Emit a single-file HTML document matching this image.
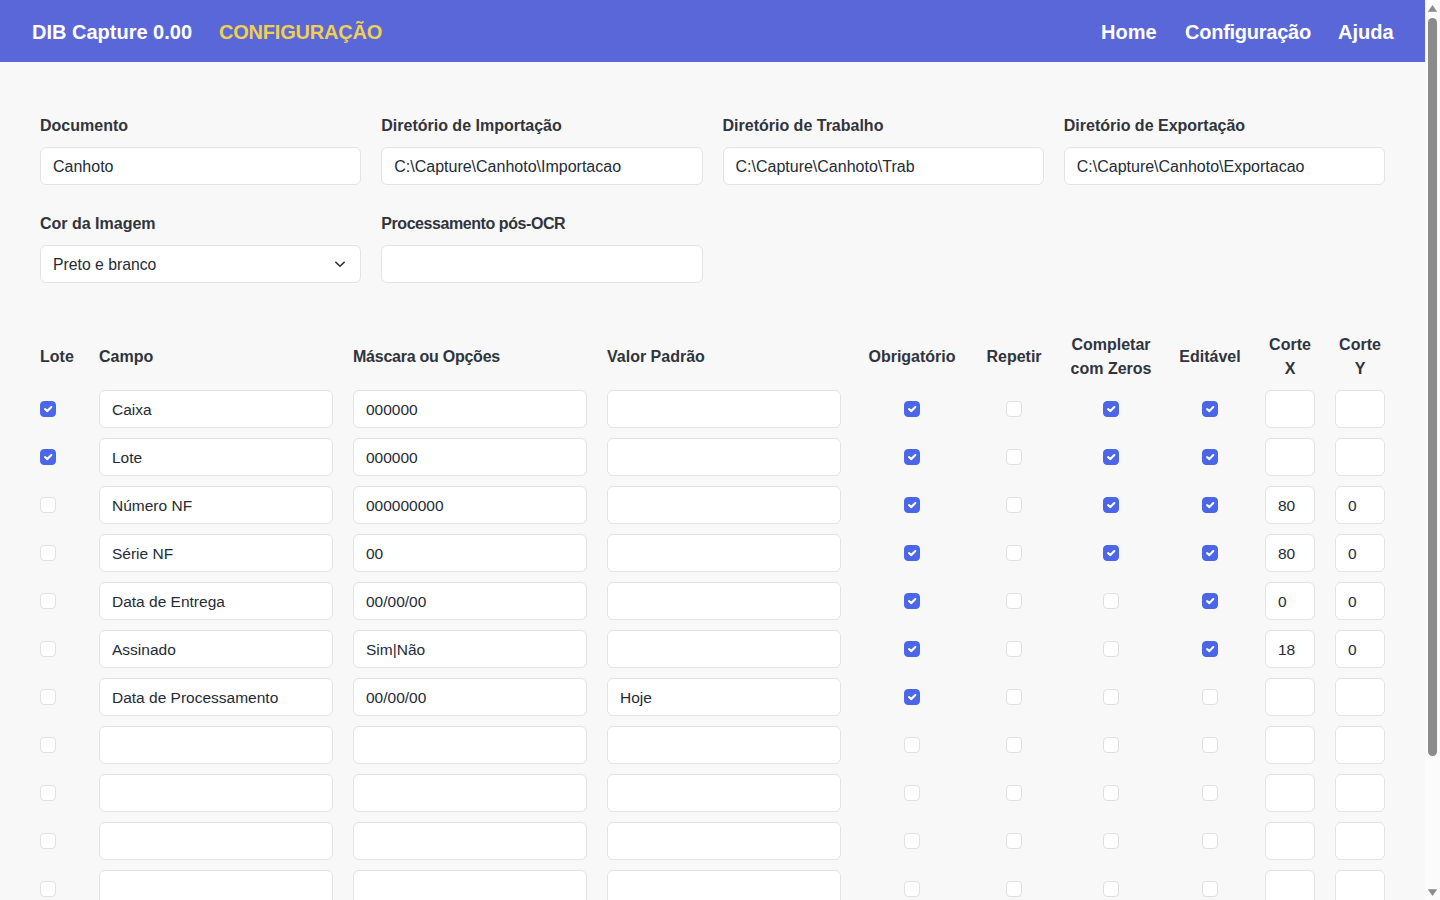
<!DOCTYPE html><html lang="pt"><head><meta charset="utf-8"><title>DIB Capture - Configuração</title><style>
*{box-sizing:border-box;margin:0;padding:0}
html,body{width:1440px;height:900px;overflow:hidden;background:#f8f8f8;font-family:"Liberation Sans",sans-serif;}
.hdr{position:absolute;left:0;top:0;width:1425px;height:62px;background:#5a67d8;}
.ht{position:absolute;top:1px;height:62px;line-height:62px;font-size:20px;font-weight:bold;color:#fff;white-space:nowrap}
.lbl{position:absolute;font-size:16px;font-weight:bold;color:#30343d;line-height:24px;white-space:nowrap}
.th{position:absolute;font-size:16px;font-weight:bold;color:#30343d;line-height:24px;white-space:nowrap;text-align:center}
.in{position:absolute;height:38px;background:#fff;border:1px solid #e3e3e5;border-radius:6px;padding:2px 0 0 12px;font-size:15.5px;line-height:34px;color:#252b36;white-space:nowrap;overflow:hidden}
.cb{position:absolute;width:16px;height:16px;border-radius:4px;background:#fff;border:1px solid #e0e0e3}
.cb.on{background:#4b66e6;border-color:#4b66e6}
.cb svg{position:absolute;left:-1px;top:-1px}
.sb{position:absolute;left:1425px;top:0;width:15px;height:900px;background:#fbfbfb}
.thumb{position:absolute;left:3px;top:18px;width:9px;height:738px;border-radius:5px;background:#8b8b8b}
</style></head><body>
<div class="hdr">
<div class="ht" style="left:32px">DIB Capture 0.00</div>
<div class="ht" style="left:219px;letter-spacing:-0.2px;color:#f0d050">CONFIGURAÇÃO</div>
<div class="ht" style="left:1101px">Home</div>
<div class="ht" style="left:1185px;letter-spacing:-0.25px">Configuração</div>
<div class="ht" style="left:1338px">Ajuda</div>
</div>
<div class="lbl" style="left:40px;top:114px">Documento</div>
<div class="in" style="left:40px;top:147px;width:321.25px;font-size:16px">Canhoto</div>
<div class="lbl" style="left:381.25px;top:114px">Diretório de Importação</div>
<div class="in" style="left:381.25px;top:147px;width:321.25px;font-size:16px">C:\Capture\Canhoto\Importacao</div>
<div class="lbl" style="left:722.5px;top:114px">Diretório de Trabalho</div>
<div class="in" style="left:722.5px;top:147px;width:321.25px;font-size:16px">C:\Capture\Canhoto\Trab</div>
<div class="lbl" style="left:1063.75px;top:114px">Diretório de Exportação</div>
<div class="in" style="left:1063.75px;top:147px;width:321.25px;font-size:16px">C:\Capture\Canhoto\Exportacao</div>
<div class="lbl" style="left:40px;top:212px">Cor da Imagem</div>
<div class="in" style="left:40px;top:245px;width:321.25px;font-size:15.75px">Preto e branco<svg style="position:absolute;left:293px;top:15px" width="13" height="8" viewBox="0 0 13 8"><path d="M1.4 0.9L6 5.2L10.6 0.9" fill="none" stroke="#333" stroke-width="1.5"/></svg></div>
<div class="lbl" style="left:381.25px;top:212px;letter-spacing:-0.43px">Processamento pós-OCR</div>
<div class="in" style="left:381.25px;top:245px;width:321.25px"></div>
<div class="lbl" style="left:40px;top:345px">Lote</div>
<div class="lbl" style="left:99px;top:345px">Campo</div>
<div class="lbl" style="left:353px;top:345px"><span style='letter-spacing:-0.25px'>Máscara ou Opções</span></div>
<div class="lbl" style="left:607px;top:345px">Valor Padrão</div>
<div class="th" style="left:812px;width:200px;top:345px">Obrigatório</div>
<div class="th" style="left:914px;width:200px;top:345px">Repetir</div>
<div class="th" style="left:1011px;width:200px;top:333px">Completar<br>com Zeros</div>
<div class="th" style="left:1110px;width:200px;top:345px">Editável</div>
<div class="th" style="left:1190px;width:200px;top:333px">Corte<br>X</div>
<div class="th" style="left:1260px;width:200px;top:333px">Corte<br>Y</div>
<div class="cb on" style="left:40px;top:401px"><svg viewBox="0 0 16 16" width="16" height="16"><path fill="none" stroke="#fff" stroke-width="2.1" stroke-linecap="round" stroke-linejoin="round" d="M5.1 8.1L7.4 10.1L11.3 6.1"/></svg></div>
<div class="in" style="left:99px;top:390px;width:234px">Caixa</div>
<div class="in" style="left:353px;top:390px;width:234px">000000</div>
<div class="in" style="left:607px;top:390px;width:234px"></div>
<div class="cb on" style="left:904px;top:401px"><svg viewBox="0 0 16 16" width="16" height="16"><path fill="none" stroke="#fff" stroke-width="2.1" stroke-linecap="round" stroke-linejoin="round" d="M5.1 8.1L7.4 10.1L11.3 6.1"/></svg></div>
<div class="cb" style="left:1006px;top:401px"></div>
<div class="cb on" style="left:1103px;top:401px"><svg viewBox="0 0 16 16" width="16" height="16"><path fill="none" stroke="#fff" stroke-width="2.1" stroke-linecap="round" stroke-linejoin="round" d="M5.1 8.1L7.4 10.1L11.3 6.1"/></svg></div>
<div class="cb on" style="left:1202px;top:401px"><svg viewBox="0 0 16 16" width="16" height="16"><path fill="none" stroke="#fff" stroke-width="2.1" stroke-linecap="round" stroke-linejoin="round" d="M5.1 8.1L7.4 10.1L11.3 6.1"/></svg></div>
<div class="in" style="left:1265px;top:390px;width:50px"></div>
<div class="in" style="left:1335px;top:390px;width:50px"></div>
<div class="cb on" style="left:40px;top:449px"><svg viewBox="0 0 16 16" width="16" height="16"><path fill="none" stroke="#fff" stroke-width="2.1" stroke-linecap="round" stroke-linejoin="round" d="M5.1 8.1L7.4 10.1L11.3 6.1"/></svg></div>
<div class="in" style="left:99px;top:438px;width:234px">Lote</div>
<div class="in" style="left:353px;top:438px;width:234px">000000</div>
<div class="in" style="left:607px;top:438px;width:234px"></div>
<div class="cb on" style="left:904px;top:449px"><svg viewBox="0 0 16 16" width="16" height="16"><path fill="none" stroke="#fff" stroke-width="2.1" stroke-linecap="round" stroke-linejoin="round" d="M5.1 8.1L7.4 10.1L11.3 6.1"/></svg></div>
<div class="cb" style="left:1006px;top:449px"></div>
<div class="cb on" style="left:1103px;top:449px"><svg viewBox="0 0 16 16" width="16" height="16"><path fill="none" stroke="#fff" stroke-width="2.1" stroke-linecap="round" stroke-linejoin="round" d="M5.1 8.1L7.4 10.1L11.3 6.1"/></svg></div>
<div class="cb on" style="left:1202px;top:449px"><svg viewBox="0 0 16 16" width="16" height="16"><path fill="none" stroke="#fff" stroke-width="2.1" stroke-linecap="round" stroke-linejoin="round" d="M5.1 8.1L7.4 10.1L11.3 6.1"/></svg></div>
<div class="in" style="left:1265px;top:438px;width:50px"></div>
<div class="in" style="left:1335px;top:438px;width:50px"></div>
<div class="cb" style="left:40px;top:497px"></div>
<div class="in" style="left:99px;top:486px;width:234px">Número NF</div>
<div class="in" style="left:353px;top:486px;width:234px">000000000</div>
<div class="in" style="left:607px;top:486px;width:234px"></div>
<div class="cb on" style="left:904px;top:497px"><svg viewBox="0 0 16 16" width="16" height="16"><path fill="none" stroke="#fff" stroke-width="2.1" stroke-linecap="round" stroke-linejoin="round" d="M5.1 8.1L7.4 10.1L11.3 6.1"/></svg></div>
<div class="cb" style="left:1006px;top:497px"></div>
<div class="cb on" style="left:1103px;top:497px"><svg viewBox="0 0 16 16" width="16" height="16"><path fill="none" stroke="#fff" stroke-width="2.1" stroke-linecap="round" stroke-linejoin="round" d="M5.1 8.1L7.4 10.1L11.3 6.1"/></svg></div>
<div class="cb on" style="left:1202px;top:497px"><svg viewBox="0 0 16 16" width="16" height="16"><path fill="none" stroke="#fff" stroke-width="2.1" stroke-linecap="round" stroke-linejoin="round" d="M5.1 8.1L7.4 10.1L11.3 6.1"/></svg></div>
<div class="in" style="left:1265px;top:486px;width:50px">80</div>
<div class="in" style="left:1335px;top:486px;width:50px">0</div>
<div class="cb" style="left:40px;top:545px"></div>
<div class="in" style="left:99px;top:534px;width:234px">Série NF</div>
<div class="in" style="left:353px;top:534px;width:234px">00</div>
<div class="in" style="left:607px;top:534px;width:234px"></div>
<div class="cb on" style="left:904px;top:545px"><svg viewBox="0 0 16 16" width="16" height="16"><path fill="none" stroke="#fff" stroke-width="2.1" stroke-linecap="round" stroke-linejoin="round" d="M5.1 8.1L7.4 10.1L11.3 6.1"/></svg></div>
<div class="cb" style="left:1006px;top:545px"></div>
<div class="cb on" style="left:1103px;top:545px"><svg viewBox="0 0 16 16" width="16" height="16"><path fill="none" stroke="#fff" stroke-width="2.1" stroke-linecap="round" stroke-linejoin="round" d="M5.1 8.1L7.4 10.1L11.3 6.1"/></svg></div>
<div class="cb on" style="left:1202px;top:545px"><svg viewBox="0 0 16 16" width="16" height="16"><path fill="none" stroke="#fff" stroke-width="2.1" stroke-linecap="round" stroke-linejoin="round" d="M5.1 8.1L7.4 10.1L11.3 6.1"/></svg></div>
<div class="in" style="left:1265px;top:534px;width:50px">80</div>
<div class="in" style="left:1335px;top:534px;width:50px">0</div>
<div class="cb" style="left:40px;top:593px"></div>
<div class="in" style="left:99px;top:582px;width:234px">Data de Entrega</div>
<div class="in" style="left:353px;top:582px;width:234px">00/00/00</div>
<div class="in" style="left:607px;top:582px;width:234px"></div>
<div class="cb on" style="left:904px;top:593px"><svg viewBox="0 0 16 16" width="16" height="16"><path fill="none" stroke="#fff" stroke-width="2.1" stroke-linecap="round" stroke-linejoin="round" d="M5.1 8.1L7.4 10.1L11.3 6.1"/></svg></div>
<div class="cb" style="left:1006px;top:593px"></div>
<div class="cb" style="left:1103px;top:593px"></div>
<div class="cb on" style="left:1202px;top:593px"><svg viewBox="0 0 16 16" width="16" height="16"><path fill="none" stroke="#fff" stroke-width="2.1" stroke-linecap="round" stroke-linejoin="round" d="M5.1 8.1L7.4 10.1L11.3 6.1"/></svg></div>
<div class="in" style="left:1265px;top:582px;width:50px">0</div>
<div class="in" style="left:1335px;top:582px;width:50px">0</div>
<div class="cb" style="left:40px;top:641px"></div>
<div class="in" style="left:99px;top:630px;width:234px">Assinado</div>
<div class="in" style="left:353px;top:630px;width:234px">Sim|Não</div>
<div class="in" style="left:607px;top:630px;width:234px"></div>
<div class="cb on" style="left:904px;top:641px"><svg viewBox="0 0 16 16" width="16" height="16"><path fill="none" stroke="#fff" stroke-width="2.1" stroke-linecap="round" stroke-linejoin="round" d="M5.1 8.1L7.4 10.1L11.3 6.1"/></svg></div>
<div class="cb" style="left:1006px;top:641px"></div>
<div class="cb" style="left:1103px;top:641px"></div>
<div class="cb on" style="left:1202px;top:641px"><svg viewBox="0 0 16 16" width="16" height="16"><path fill="none" stroke="#fff" stroke-width="2.1" stroke-linecap="round" stroke-linejoin="round" d="M5.1 8.1L7.4 10.1L11.3 6.1"/></svg></div>
<div class="in" style="left:1265px;top:630px;width:50px">18</div>
<div class="in" style="left:1335px;top:630px;width:50px">0</div>
<div class="cb" style="left:40px;top:689px"></div>
<div class="in" style="left:99px;top:678px;width:234px">Data de Processamento</div>
<div class="in" style="left:353px;top:678px;width:234px">00/00/00</div>
<div class="in" style="left:607px;top:678px;width:234px">Hoje</div>
<div class="cb on" style="left:904px;top:689px"><svg viewBox="0 0 16 16" width="16" height="16"><path fill="none" stroke="#fff" stroke-width="2.1" stroke-linecap="round" stroke-linejoin="round" d="M5.1 8.1L7.4 10.1L11.3 6.1"/></svg></div>
<div class="cb" style="left:1006px;top:689px"></div>
<div class="cb" style="left:1103px;top:689px"></div>
<div class="cb" style="left:1202px;top:689px"></div>
<div class="in" style="left:1265px;top:678px;width:50px"></div>
<div class="in" style="left:1335px;top:678px;width:50px"></div>
<div class="cb" style="left:40px;top:737px"></div>
<div class="in" style="left:99px;top:726px;width:234px"></div>
<div class="in" style="left:353px;top:726px;width:234px"></div>
<div class="in" style="left:607px;top:726px;width:234px"></div>
<div class="cb" style="left:904px;top:737px"></div>
<div class="cb" style="left:1006px;top:737px"></div>
<div class="cb" style="left:1103px;top:737px"></div>
<div class="cb" style="left:1202px;top:737px"></div>
<div class="in" style="left:1265px;top:726px;width:50px"></div>
<div class="in" style="left:1335px;top:726px;width:50px"></div>
<div class="cb" style="left:40px;top:785px"></div>
<div class="in" style="left:99px;top:774px;width:234px"></div>
<div class="in" style="left:353px;top:774px;width:234px"></div>
<div class="in" style="left:607px;top:774px;width:234px"></div>
<div class="cb" style="left:904px;top:785px"></div>
<div class="cb" style="left:1006px;top:785px"></div>
<div class="cb" style="left:1103px;top:785px"></div>
<div class="cb" style="left:1202px;top:785px"></div>
<div class="in" style="left:1265px;top:774px;width:50px"></div>
<div class="in" style="left:1335px;top:774px;width:50px"></div>
<div class="cb" style="left:40px;top:833px"></div>
<div class="in" style="left:99px;top:822px;width:234px"></div>
<div class="in" style="left:353px;top:822px;width:234px"></div>
<div class="in" style="left:607px;top:822px;width:234px"></div>
<div class="cb" style="left:904px;top:833px"></div>
<div class="cb" style="left:1006px;top:833px"></div>
<div class="cb" style="left:1103px;top:833px"></div>
<div class="cb" style="left:1202px;top:833px"></div>
<div class="in" style="left:1265px;top:822px;width:50px"></div>
<div class="in" style="left:1335px;top:822px;width:50px"></div>
<div class="cb" style="left:40px;top:881px"></div>
<div class="in" style="left:99px;top:870px;width:234px"></div>
<div class="in" style="left:353px;top:870px;width:234px"></div>
<div class="in" style="left:607px;top:870px;width:234px"></div>
<div class="cb" style="left:904px;top:881px"></div>
<div class="cb" style="left:1006px;top:881px"></div>
<div class="cb" style="left:1103px;top:881px"></div>
<div class="cb" style="left:1202px;top:881px"></div>
<div class="in" style="left:1265px;top:870px;width:50px"></div>
<div class="in" style="left:1335px;top:870px;width:50px"></div>
<div class="sb"><svg style="position:absolute;left:3px;top:5px" width="9" height="7" viewBox="0 0 9 7"><path d="M4.5 0.5L8.7 6.5H0.3z" fill="#8b8b8b" stroke="#8b8b8b" stroke-width="0.6" stroke-linejoin="round"/></svg><div class="thumb"></div><svg style="position:absolute;left:3px;top:889px" width="9" height="7" viewBox="0 0 9 7"><path d="M4.5 6.5L8.7 0.5H0.3z" fill="#8b8b8b" stroke="#8b8b8b" stroke-width="0.6" stroke-linejoin="round"/></svg></div>
</body></html>
